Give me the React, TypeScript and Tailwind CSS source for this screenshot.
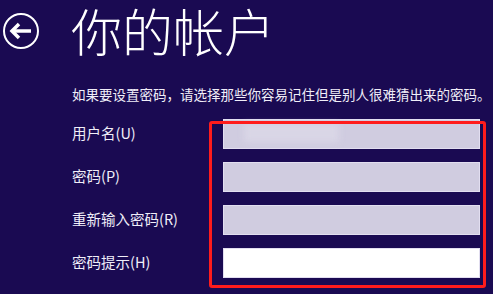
import React from "react";

const font = { fontFamily: '"Noto Sans CJK SC", "Noto Sans", sans-serif' };

const rows = [
  { label: "用户名(U)", bg: "bg-[#d0cce0]", blur: true },
  { label: "密码(P)", bg: "bg-[#d0cce0]" },
  { label: "重新输入密码(R)", bg: "bg-[#d0cce0]" },
  { label: "密码提示(H)", bg: "bg-white" },
];

export default function App() {
  return (
    <div className="relative w-[493px] h-[294px] overflow-hidden bg-[#1a0a52] text-white" style={font}>
      <div className="flex items-start pl-[3px]">
        <svg width="36" height="36" viewBox="0 0 36 36" className="shrink-0 mt-[13px]">
          <circle cx="18" cy="18" r="17" fill="none" stroke="white" strokeWidth="2" />
          <path d="M9 18 H28" stroke="white" strokeWidth="3.5" strokeLinecap="butt" />
          <path d="M16 11 L9 18 L16 25" fill="none" stroke="white" strokeWidth="3.5" strokeLinejoin="miter" />
        </svg>
        <div className="ml-[32px] mt-[2px] text-[51px] leading-[56px] font-extralight">你的帐户</div>
      </div>
      <div className="pl-[72px] mt-[30px] text-[13.5px] leading-none whitespace-nowrap text-[#f0eef8]">
        如果要设置密码，请选择那些你容易记住但是别人很难猜出来的密码。
      </div>
      <div className="flex flex-col gap-[13px] mt-[17px]">
        {rows.map((r) => (
          <div key={r.label} className="flex items-center">
            <div className="w-[223px] pl-[72px] text-[14.5px] leading-none text-[#f0eef8]">{r.label}</div>
            <div className={`relative w-[257px] h-[30px] ${r.bg} border border-[#e2def0]`}>
              {r.blur && <div className="absolute left-[20px] top-[4px] w-[95px] h-[18px] bg-[#d9d6e6] blur-[3px]" />}
            </div>
          </div>
        ))}
      </div>
      <div className="absolute left-[209px] top-[121px] w-[277px] h-[167px] border-[3px] border-[#ff1c1c] rounded-[3px] pointer-events-none" />
    </div>
  );
}
